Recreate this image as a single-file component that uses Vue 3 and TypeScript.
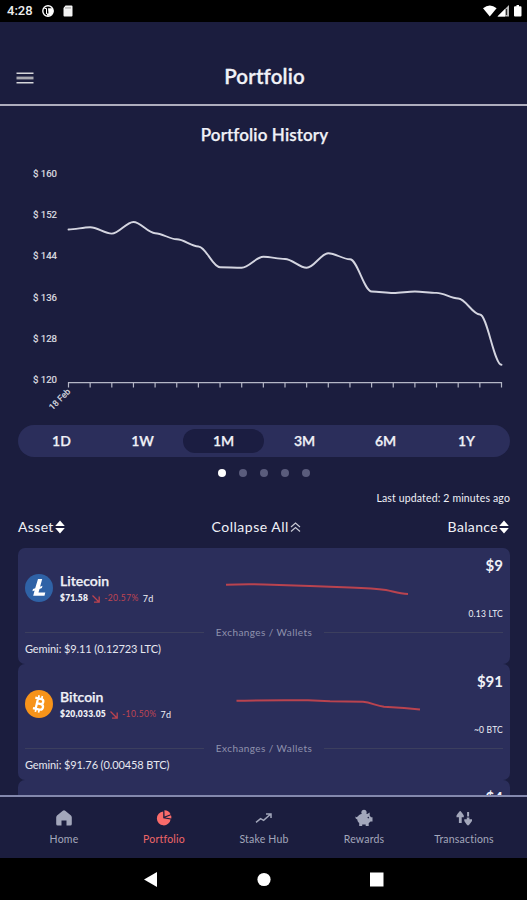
<script setup lang="ts">
interface Asset {
  id: 'ltc' | 'btc'
  name: string
  price: string
  change: string
  balance: string
  amount: string
  holding: string
  spark: string
}

const assets: Asset[] = [
  {
    id: 'ltc', name: 'Litecoin', price: '$71.58', change: '-20.57%', balance: '$9', amount: '0.13 LTC',
    holding: 'Gemini: $9.11 (0.12723 LTC)',
    spark: 'M226 36.8 C236 36.2 252 36 264 36.4 L310 38 L350 39.6 C366 40.2 378 41 386 42 C394 43.6 399 45.6 408 46',
  },
  {
    id: 'btc', name: 'Bitcoin', price: '$20,033.05', change: '-10.50%', balance: '$91', amount: '~0 BTC',
    holding: 'Gemini: $91.76 (0.00458 BTC)',
    spark: 'M236.5 36.8 C254 36 290 36.4 308 36.2 L330 37.2 L363 37.8 C371 38.6 376 41.6 384 42.8 L404 44 L420 45.6',
  },
]

const axis = [160, 152, 144, 136, 128, 120]
const ranges = ['1D', '1W', '1M', '3M', '6M', '1Y']
const activeRange = '1M'

const left = 68.5
const step = 21.65
const ys = [229.5, 227.2, 233.6, 222, 233.2, 239.3, 246.5, 267.2, 267.8, 256.8, 259, 267.8, 253.2, 259.3, 291.5, 293, 291.5, 292.9, 298.5, 314.5, 364.8]
const ticks = ys.map((_, i) => left + i * step)

/* Smooth line with flat tangents at every sample */
const line = ys
  .map((y, i) => {
    const x = left + i * step
    const c = step * 0.34
    return i === 0 ? `M${x} ${y}` : `C${x - step + c} ${ys[i - 1]} ${x - c} ${y} ${x} ${y}`
  })
  .join(' ')

const tabs = ['Home', 'Portfolio', 'Stake Hub', 'Rewards', 'Transactions']
</script>

<template>
  <div class="screen">
    <div class="status">
      <span class="clock">4:28</span>
      <svg class="s-left" width="34" height="14" viewBox="0 0 34 14">
        <circle cx="7" cy="7" r="5.2" fill="none" stroke="#fff" stroke-width="1.4" />
        <path d="M7 4.200h4.500a5 5 0 0 1-3.500 7.500H6V9.500h1.500z" fill="#fff" />
        <path d="M3.500 4.500h2v5.500" fill="none" stroke="#fff" stroke-width="1" />
        <path d="M24.500 1.600h6a1 1 0 0 1 1 1v9a1 1 0 0 1-1 1h-7a1 1 0 0 1-1-1V4z" fill="#f4f4f4" />
        <path d="M25 3v1.800M27 3v1.800M29 3v1.800" stroke="#777" stroke-width=".8" />
      </svg>
      <svg class="s-right" width="42" height="14" viewBox="0 0 42 14">
        <path d="M0 4.200Q6.800-1.400 13.600 4.200L6.800 12.400z" fill="#fff" />
        <path d="M14.500 12.400L26 1v11.400z" fill="#bbb" />
        <path d="M14.500 12.400L22 5v7.400z" fill="#fff" />
        <path d="M23.500 5v6" stroke="#333" stroke-width="1.200" />
        <path d="M33.500 1h2.500v1.200h1.500a1 1 0 0 1 1 1v8.300a1 1 0 0 1-1 1h-5.500a1 1 0 0 1-1-1V3.200a1 1 0 0 1 1-1h1.500z" fill="#fff" />
      </svg>
    </div>

    <header class="header">
      <svg class="menu" width="18" height="12" viewBox="0 0 18 12">
        <path d="M.5 1.200h17M.5 10.800h17" stroke="#d6d6da" stroke-width="1.500" />
        <path d="M.5 6h17" stroke="#a8a8b0" stroke-width="2.800" />
      </svg>
      <h1>Portfolio</h1>
    </header>

    <main class="content">
      <h2>Portfolio History</h2>
      <svg class="chart" width="527" height="266" viewBox="0 154 527 266">
        <text v-for="(v, i) in axis" :key="v" x="33" :y="176.600 + i * 41.300" class="ylab" textLength="24" lengthAdjust="spacingAndGlyphs">$ {{ v }}</text>
        <path :d="line" fill="none" stroke="#d4d5e0" stroke-width="1.900" stroke-linecap="round" />
        <path d="M68 382.700H502" stroke="#b4b6c6" stroke-width="1.300" />
        <path v-for="t in ticks" :key="t" :d="`M${t} 382v5.500`" stroke="#b4b6c6" stroke-width="1.200" />
        <text class="xlab" transform="translate(52.500 410.500) rotate(-45)" textLength="26">18 Feb</text>
      </svg>

      <div class="ranges">
        <span v-for="r in ranges" :key="r" :class="{ on: r === activeRange }">{{ r }}</span>
      </div>
      <div class="dots"><i v-for="n in 5" :key="n" :class="{ on: n === 1 }"></i></div>
      <p class="updated">Last updated: 2 minutes ago</p>

      <div class="sort">
        <span>Asset<svg width="10" height="14" viewBox="0 0 10 14"><path d="M5 .5L9.800 6H.2zM5 13.500L9.800 8H.2z" fill="#fff" /></svg></span>
        <span class="s-all">Collapse All<svg width="11" height="12" viewBox="0 0 11 12"><path d="M1 6L5.500 2 10 6M1 10.500l4.500-4 4.500 4" fill="none" stroke="#c8c9d4" stroke-width="1.200" /></svg></span>
        <span>Balance<svg width="10" height="14" viewBox="0 0 10 14"><path d="M5 .5L9.800 6H.2zM5 13.500L9.800 8H.2z" fill="#fff" /></svg></span>
      </div>

      <section v-for="a in assets" :key="a.id" class="card">
        <svg class="spark" width="492" height="74" viewBox="18 0 492 74">
          <path :d="a.spark" fill="none" stroke="#b9434f" stroke-width="2" />
        </svg>
        <div class="main">
          <svg v-if="a.id === 'ltc'" class="coin" width="28" height="28" viewBox="0 0 28 28">
            <circle cx="14" cy="14" r="14" fill="#2f62a6" />
            <path d="M13 5h4.200l-2.100 7.700 2.400-.9-.6 2.200-2.400.9-1 3.700h6.800l-.8 3.200H8.200l1.400-5.400-2.200.8.600-2.200 2.200-.8z" fill="#fff" />
          </svg>
          <svg v-else class="coin" width="28" height="28" viewBox="0 0 28 28">
            <circle cx="14" cy="14" r="14" fill="#f7931a" />
            <g transform="rotate(13 14 14)" fill="none" stroke="#fff">
              <path d="M9 8.700h6.200a2.500 2.500 0 0 1 0 5H11.500M11.500 13.700h4.300a2.800 2.800 0 0 1 0 5.600H9M11.800 8.500v11" stroke-width="2.300" />
              <path d="M12.200 5.500v3M15.500 5.500v3M12.200 19.500v3M15.500 19.500v3" stroke-width="1.700" />
            </g>
          </svg>
          <div class="info">
            <strong class="name">{{ a.name }}</strong>
            <div class="price">
              <b>{{ a.price }}</b>
              <svg width="8" height="8" viewBox="0 0 8 8"><path d="M.5.5l6.500 6.500M7.200 1.500v5.700H2" fill="none" stroke="#bd434f" stroke-width="1.300" /></svg>
              <span class="chg">{{ a.change }}</span>
              <span class="per">7d</span>
            </div>
          </div>
          <div class="bal"><strong>{{ a.balance }}</strong><span>{{ a.amount }}</span></div>
        </div>
        <div class="divider"><span>Exchanges / Wallets</span></div>
        <div class="holding">{{ a.holding }}</div>
      </section>
      <section class="card"><div class="main"><div class="bal"><strong>$4</strong></div></div></section>
    </main>

    <nav class="tabs">
      <a v-for="(t, i) in tabs" :key="t" :class="{ on: i === 1 }">
        <svg width="18" height="18" viewBox="0 0 18 18">
          <path v-if="i === 0" d="M9 1.200Q9.600 1.200 10.200 1.700L16 6.600Q16.800 7.400 16.800 8.500V15Q16.800 16.500 15.300 16.500H11.500V11.500H6.500V16.500H2.700Q1.200 16.500 1.200 15V8.500Q1.200 7.400 2 6.600L7.800 1.700Q8.400 1.200 9 1.200z" />
          <g v-else-if="i === 1"><path d="M8.200 2.600v6.700l7.400 1.200A6.900 6.900 0 1 1 8.200 2.600z" /><path d="M9.400 1.200A6.900 6.900 0 0 1 15.600 5.200L9.600 7.600z" /><path d="M10.200 8.500L16 6.200Q16.600 7.800 16.300 9.400z" /></g>
          <path v-else-if="i === 2" d="M1 13.300l4.600-3.600 3 1.600 6.600-5.800M11 5h5v4" fill="none" stroke="#a3a7bb" stroke-width="1.500" />
          <g v-else-if="i === 3"><path d="M3 7.200C4.200 5.400 6.500 4.500 9 4.500c1.300 0 2.300.1 3.200.5l2.500-1.500v3.200c.6.500 1 .9 1.300 1.500h1.500v4.300h-2l-1.800 1.800V17h-3v-1.600H7.200V17h-3v-3C3 13 2.400 12 2.300 10.500.9 10.200.2 9 .5 7.500l1 .8z" /><circle cx="9" cy="3.300" r="2.600" /><circle cx="13.300" cy="8.600" r=".8" fill="#1b1d3e" /></g>
          <g v-else><path d="M5.200 2Q6 2 8.800 6.500V8.300H6.700V14H3.900V8.300H1.500V6.500Q4.400 2 5.200 2zM13 16.500Q12.200 16.500 9.300 12V10.200H17V12Q13.800 16.500 13 16.500z" /><path d="M12.100 3h2v4.500h-2zM11.800 8.500h2.600v3h-2.600z" /></g>
        </svg>
        <span>{{ t }}</span>
      </a>
    </nav>
    <div class="system">
      <svg width="527" height="42" viewBox="0 858 527 42" fill="#fff">
        <path d="M144 879.500L157 872v15z" />
        <circle cx="264" cy="879.500" r="6.600" />
        <rect x="370" y="872.500" width="13.500" height="14" />
      </svg>
    </div>
  </div>
</template>

<style>
body { margin: 0; background: #000; }
</style>

<style scoped>
.screen {
  width: 527px; height: 900px; overflow: hidden; display: flex; flex-direction: column;
  background: #1b1d3e; color: #f0f1f7; font-family: Lato, "Open Sans", sans-serif;
  font-variant-ligatures: none;
}
.status { flex: none; height: 22px; background: #000; display: flex; align-items: center; padding: 0 8px 0 7px; }
.clock { font: 500 13px/22px Roboto, sans-serif; color: #eee; width: 34px; }
.s-right { margin-left: auto; margin-right: -6px; }
.header { flex: none; height: 84px; box-sizing: border-box; border-bottom: 2px solid #aeadbd; position: relative; padding-top: 40px; }
.menu { position: absolute; left: 16px; top: 50px; }
h1 { margin: 0; padding-left: 2px; font-size: 20.500px; line-height: 29px; font-weight: 600; text-align: center; letter-spacing: .15px; -webkit-text-stroke: .3px #f0f1f7; }
.content { flex: 1; min-height: 0; overflow: hidden; }
h2 { margin: 0; padding: 15px 0 0 2px; box-sizing: border-box; height: 48px; font-size: 17px; line-height: 28px; font-weight: 600; text-align: center; letter-spacing: .12px; -webkit-text-stroke: .25px #f0f1f7; }
.chart { display: block; }
.ylab { font: 9.500px Roboto, sans-serif; fill: #e2e3ea; stroke: #e2e3ea; stroke-width: .15px; }
.xlab { font: 8.500px Roboto, sans-serif; fill: #e2e3ea; stroke: #e2e3ea; stroke-width: .15px; }
.ranges { margin: 5px 17px 0 18px; height: 32px; border-radius: 16px; background: #2b2e5b; display: grid; grid-template-columns: repeat(6, 1fr); padding: 0 3px; align-items: center; }
.ranges span { height: 24px; line-height: 24px; border-radius: 12px; text-align: center; font-size: 14px; font-weight: 600; -webkit-text-stroke: .25px #f0f1f7; }
.ranges .on { background: #1b1d41; }
.dots { display: flex; justify-content: center; gap: 13px; padding-top: 12px; }
.dots i { width: 8px; height: 8px; border-radius: 50%; background: #5a5c7c; }
.dots .on { background: #fff; }
.updated { margin: 14px 17px 0; font-size: 10.500px; line-height: 14px; text-align: right; letter-spacing: .15px; }
.sort { display: flex; justify-content: space-between; margin: 13px 18px 0; height: 18px; line-height: 18px; font-size: 14px; letter-spacing: .35px; }
.sort span { display: flex; align-items: center; gap: 1px; }
.sort .s-all { letter-spacing: .5px; }
.card { position: relative; height: 116px; margin: 0 17px 0 18px; background: #2b2e5b; border-radius: 7px; box-sizing: border-box; padding: 0 7px; }
.sort + .card { margin-top: 12px; }
.spark { position: absolute; left: 0; top: 0; }
.main { display: flex; height: 76px; }
.coin { margin-top: 26px; }
.info { margin: 24px 0 0 7px; }
.name { display: block; font-size: 14px; line-height: 18px; font-weight: 600; -webkit-text-stroke: .25px #f0f1f7; }
.price { display: flex; align-items: center; height: 16px; font-size: 8.500px; white-space: nowrap; letter-spacing: .25px; }
.price b { font-weight: 800; }
.price svg { margin: 2px 4px 0 4px; }
.chg { color: #c04552; margin-right: 4px; letter-spacing: .4px; }
.per { font-size: 9px; }
.bal { margin-left: auto; display: flex; flex-direction: column; align-items: flex-end; }
.bal strong { margin-top: 8px; font-size: 15px; line-height: 18px; font-weight: 700; }
.bal span { margin-top: 34px; font-size: 8.500px; line-height: 12px; letter-spacing: .2px; }
.divider { display: flex; align-items: center; gap: 12px; height: 16px; font-size: 10px; color: #8f92ad; letter-spacing: .42px; }
.divider::before, .divider::after { content: ""; flex: 1; height: 1px; background: #3c3f5e; }
.holding { margin-top: 1px; font-size: 11px; line-height: 16px; color: #e6e7f0; letter-spacing: -.1px; }
.tabs { flex: none; box-sizing: border-box; height: 63px; border-top: 2px solid #8388ad; display: grid; grid-template-columns: repeat(5, 100px); padding: 0 13px 0 14px; }
.tabs a { display: flex; flex-direction: column; align-items: center; padding-top: 12px; color: #a3a7bb; fill: #a3a7bb; font-size: 10.500px; line-height: 14px; letter-spacing: .2px; }
.tabs a span { margin-top: 5px; }
.tabs .on { color: #ee6668; fill: #fa6b6a; }
.system { flex: none; height: 42px; background: #000; }
.system svg { display: block; }
</style>
